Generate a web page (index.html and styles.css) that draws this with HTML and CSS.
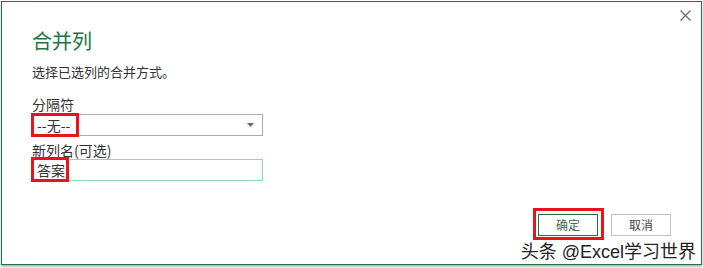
FILE: index.html
```html
<!DOCTYPE html>
<html lang="zh-CN">
<head>
<meta charset="utf-8">
<title>合并列</title>
<link rel="stylesheet" href="styles.css">
</head>
<body>
<div class="dialog">
  <div class="head">
    <svg class="close" width="11" height="11" viewBox="0 0 11 11"><path d="M0.5 0.5 L10.5 10.5 M10.5 0.5 L0.5 10.5" stroke="#6b6b6b" stroke-width="1.3" fill="none"/></svg>
  </div>
  <h1 class="title">合并列</h1>
  <p class="desc">选择已选列的合并方式。</p>
  <label class="label lbl-sep">分隔符</label>
  <div class="select">
    <span class="value">--无--</span>
    <svg class="arrow" width="7" height="4" viewBox="0 0 7 4"><polygon points="0,0 7,0 3.5,4" fill="#6b6b6b"/></svg>
    <span class="mark mark-sep"></span>
  </div>
  <label class="label lbl-name">新列名(可选)</label>
  <div class="input">
    <span class="value">答案</span>
    <span class="mark mark-name"></span>
  </div>
  <div class="buttons">
    <div class="btn btn-ok">确定<span class="mark mark-ok"></span></div>
    <div class="btn btn-cancel">取消</div>
  </div>
  <div class="watermark">头条 @Excel学习世界</div>
</div>
</body>
</html>
```
FILE: styles.css
```css
* { box-sizing: border-box; }
html, body {
  margin: 0;
  padding: 0;
  background: #ffffff;
}
body {
  width: 703px;
  height: 268px;
  overflow: hidden;
  font-family: "Noto Sans CJK SC", "Noto Sans", sans-serif;
  color: #333;
}
.dialog {
  position: relative;
  margin: 1px 0 0 1px;
  width: 701px;
  height: 264px;
  border: 1px solid #217346;
  background: #fff;
  box-shadow: 0 2px 2px rgba(0, 0, 0, 0.28);
  padding: 0 30px 0 29px;
  display: flex;
  flex-direction: column;
  align-items: flex-start;
}
.head {
  align-self: stretch;
  display: flex;
  justify-content: flex-end;
  height: 26px;
  padding-top: 8px;
  margin-right: -20px;
}
.close { display: block; }
.title {
  margin: 0;
  font-size: 20px;
  line-height: 26px;
  font-weight: normal;
  color: #217346;
  padding-left: 1px;
}
.desc {
  margin: 9px 0 0;
  font-size: 13px;
  line-height: 18px;
  color: #333;
  padding-left: 1px;
}
.label {
  font-size: 14px;
  line-height: 18px;
  color: #333;
  padding-left: 1px;
}
.lbl-sep { margin-top: 14px; }
.lbl-name { margin-top: 5px; }
.select, .input {
  position: relative;
  width: 232px;
  height: 22px;
  display: flex;
  align-items: center;
  padding-left: 5px;
  font-size: 14px;
  color: #333;
}
.select {
  margin-top: 1px;
  border: 1px solid #ababab;
}
.input {
  border: 1px solid #91d5b2;
}
.value { line-height: 20px; }
.arrow {
  position: absolute;
  right: 8px;
  top: 8px;
}
.mark {
  position: absolute;
  border: 3px solid #e8141c;
  pointer-events: none;
}
.mark-sep { left: -1px; top: -2px; width: 48px; height: 24px; }
.mark-name { left: -1px; top: -3px; width: 38px; height: 25px; }
.buttons {
  align-self: flex-end;
  margin-top: 33px;
  display: flex;
  gap: 13px;
}
.btn {
  position: relative;
  width: 60px;
  height: 22px;
  display: flex;
  align-items: center;
  justify-content: center;
  font-size: 12px;
  line-height: 16px;
}
.btn-ok {
  border: 1px solid #217346;
  color: #3d6b4b;
}
.btn-cancel {
  border: 1px solid #c3c3c3;
  color: #444;
}
.mark-ok { left: -6px; top: -7px; width: 71px; height: 32px; }
.watermark {
  position: absolute;
  right: 5px;
  bottom: 0px;
  font-size: 18px;
  line-height: 24px;
  color: #222;
  text-shadow: 0 0 2px #fff, 0 0 2px #fff;
  font-family: "Liberation Sans", "Noto Sans CJK SC", sans-serif;
}
```
